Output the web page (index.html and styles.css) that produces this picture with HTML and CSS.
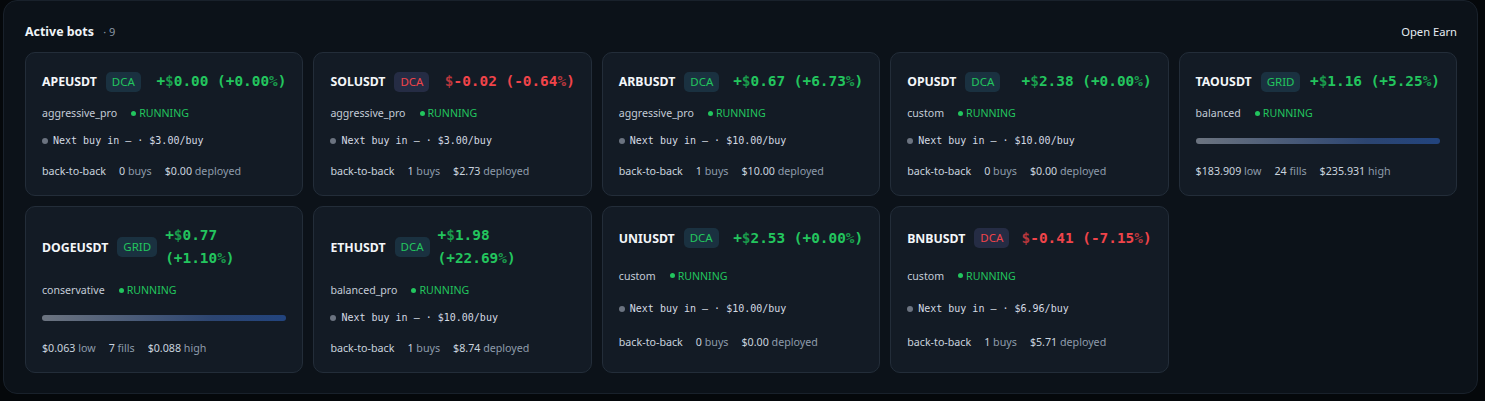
FILE: index.html
```html
<!DOCTYPE html>
<html lang="en">
<head>
    <meta charset="UTF-8">
    <meta name="viewport" content="width=device-width, initial-scale=1.0">
    <title>Active bots</title>
    <link rel="stylesheet" href="styles.css">
</head>
<body>
    <section class="panel">
        <div class="panel-head">
            <h2>Active bots <span class="count">· <span id="bot-count">0</span></span></h2>
            <a href="#" class="open-earn">Open Earn</a>
        </div>
        <div id="bots" class="bots">
            <!-- cards are rendered here -->
        </div>
    </section>

    <script>
    const bots = [
        { symbol: 'APEUSDT', type: 'DCA', pnl: 0.00, pct: 0.00, profile: 'aggressive_pro', perBuy: '3.00', mode: 'back-to-back', buys: 0, deployed: '0.00' },
        { symbol: 'SOLUSDT', type: 'DCA', pnl: -0.02, pct: -0.64, profile: 'aggressive_pro', perBuy: '3.00', mode: 'back-to-back', buys: 1, deployed: '2.73' },
        { symbol: 'ARBUSDT', type: 'DCA', pnl: 0.67, pct: 6.73, profile: 'aggressive_pro', perBuy: '10.00', mode: 'back-to-back', buys: 1, deployed: '10.00' },
        { symbol: 'OPUSDT', type: 'DCA', pnl: 2.38, pct: 0.00, profile: 'custom', perBuy: '10.00', mode: 'back-to-back', buys: 0, deployed: '0.00' },
        { symbol: 'TAOUSDT', type: 'GRID', pnl: 1.16, pct: 5.25, profile: 'balanced', low: '183.909', high: '235.931', fills: 24 },
        { symbol: 'DOGEUSDT', type: 'GRID', pnl: 0.77, pct: 1.10, profile: 'conservative', low: '0.063', high: '0.088', fills: 7 },
        { symbol: 'ETHUSDT', type: 'DCA', pnl: 1.98, pct: 22.69, profile: 'balanced_pro', perBuy: '10.00', mode: 'back-to-back', buys: 1, deployed: '8.74' },
        { symbol: 'UNIUSDT', type: 'DCA', pnl: 2.53, pct: 0.00, profile: 'custom', perBuy: '10.00', mode: 'back-to-back', buys: 0, deployed: '0.00' },
        { symbol: 'BNBUSDT', type: 'DCA', pnl: -0.41, pct: -7.15, profile: 'custom', perBuy: '6.96', mode: 'back-to-back', buys: 1, deployed: '5.71' }
    ];

    function formatPnl(bot) {
        const neg = bot.pnl < 0;
        const amount = Math.abs(bot.pnl).toFixed(2);
        const pct = Math.abs(bot.pct).toFixed(2);
        if (neg) {
            return `<span class="dim">$</span>-${amount} <span class="nobr">(-${pct}<span class="dim">%</span>)</span>`;
        }
        return `+<span class="dim">$</span>${amount} <span class="nobr">(+${pct}<span class="dim">%</span>)</span>`;
    }

    const container = document.getElementById('bots');

    bots.forEach(bot => {
        const neg = bot.pnl < 0;
        const card = document.createElement('div');
        card.classList.add('bot');

        let middle = '';
        let stats = '';
        if (bot.type === 'GRID') {
            middle = `<div class="range"><div class="range-bar"></div></div>`;
            stats = `
                <span><b>$${bot.low}</b> low</span>
                <span><b>${bot.fills}</b> fills</span>
                <span><b>$${bot.high}</b> high</span>`;
        } else {
            middle = `<div class="next-buy"><i class="dot"></i>Next buy in — · $${bot.perBuy}/buy</div>`;
            stats = `
                <span><b>${bot.mode}</b></span>
                <span><b>${bot.buys}</b> buys</span>
                <span><b>$${bot.deployed}</b> deployed</span>`;
        }

        card.innerHTML = `
            <div class="bot-head">
                <div class="ident">
                    <span class="symbol">${bot.symbol}</span>
                    <span class="badge ${neg ? 'badge-loss' : 'badge-gain'}">${bot.type}</span>
                </div>
                <div class="pnl ${neg ? 'loss' : 'gain'}">${formatPnl(bot)}</div>
            </div>
            <div class="profile">
                <span>${bot.profile}</span>
                <span class="status"><i class="status-dot"></i>RUNNING</span>
            </div>
            ${middle}
            <div class="stats">${stats}</div>
        `;
        container.appendChild(card);
    });

    document.getElementById('bot-count').textContent = bots.length;
    </script>
</body>
</html>
```

FILE: styles.css
```css
/* styles.css */
body {
    margin: 0;
    background-color: #05080b;
    font-family: "Noto Sans", Arial, sans-serif;
    color: #c9d3de;
}

.panel {
    margin: 0 7px 8px 3px;
    padding: 20px 20px 20px 21px;
    background-color: #0c1219;
    border: 1px solid #19212b;
    border-radius: 14px;
}

.panel-head {
    display: flex;
    justify-content: space-between;
    align-items: center;
    height: 20px;
    margin-bottom: 11px;
}

.panel-head h2 {
    margin: 0;
    font-size: 12.4px;
    font-weight: 700;
    color: #f0f4f8;
}

.panel-head .count {
    margin-left: 6px;
    font-size: 11px;
    font-weight: 400;
    color: #8a96a4;
}

.open-earn {
    font-size: 11.2px;
    color: #e6ecf2;
    text-decoration: none;
}

.bots {
    display: grid;
    grid-template-columns: repeat(5, 1fr);
    gap: 10px;
}

.bot {
    display: grid;
    gap: 10px;
    padding: 17px 16px 15px;
    background-color: #131b25;
    border: 1px solid #232d39;
    border-radius: 10px;
    min-width: 0;
}

.bot-head {
    display: flex;
    justify-content: space-between;
    align-items: center;
    gap: 8px;
    margin-bottom: 1px;
}

.ident {
    display: flex;
    align-items: center;
    gap: 9px;
    flex-shrink: 0;
}

.symbol {
    font-size: 12.3px;
    font-weight: 700;
    color: #f3f6f9;
}

.badge {
    padding: 2px 6px;
    border-radius: 5px;
    font-size: 11.5px;
    line-height: 16px;
}

.badge-gain {
    background-color: #1a3140;
    color: #23c55e;
}

.badge-loss {
    background-color: #252c44;
    color: #f0444a;
}

.pnl {
    font-family: "DejaVu Sans Mono", monospace;
    font-size: 14.4px;
    font-weight: 700;
    line-height: 23px;
}

.pnl.gain {
    color: #23c55e;
}

.pnl.gain .dim {
    color: #1a9a4c;
}

.pnl.loss {
    color: #f0444a;
}

.pnl.loss .dim {
    color: #b8373d;
}

.profile {
    display: flex;
    align-items: center;
    gap: 14px;
    font-size: 10.6px;
    line-height: 18px;
    color: #c3ccd7;
}

.status {
    display: flex;
    align-items: center;
    gap: 3px;
    color: #22c55e;
}

.status-dot {
    width: 5px;
    height: 5px;
    border-radius: 50%;
    background-color: #22c55e;
}

.next-buy {
    display: flex;
    align-items: center;
    gap: 5px;
    font-family: "DejaVu Sans Mono", monospace;
    font-size: 10px;
    line-height: 18px;
    color: #d3dae3;
}

.next-buy .dot {
    width: 6px;
    height: 6px;
    border-radius: 50%;
    background-color: #6b7380;
}

.range {
    display: flex;
    align-items: center;
    height: 18px;
}

.range-bar {
    width: 100%;
    height: 6px;
    border-radius: 3px;
    background: linear-gradient(90deg, #6c7480, #2c4571 70%, #22447e);
}

.stats {
    display: flex;
    gap: 13px;
    margin-top: 2px;
    font-size: 10.7px;
    line-height: 18px;
    color: #8e9bab;
}

.stats b {
    font-weight: 400;
    color: #c9d3de;
}
```
